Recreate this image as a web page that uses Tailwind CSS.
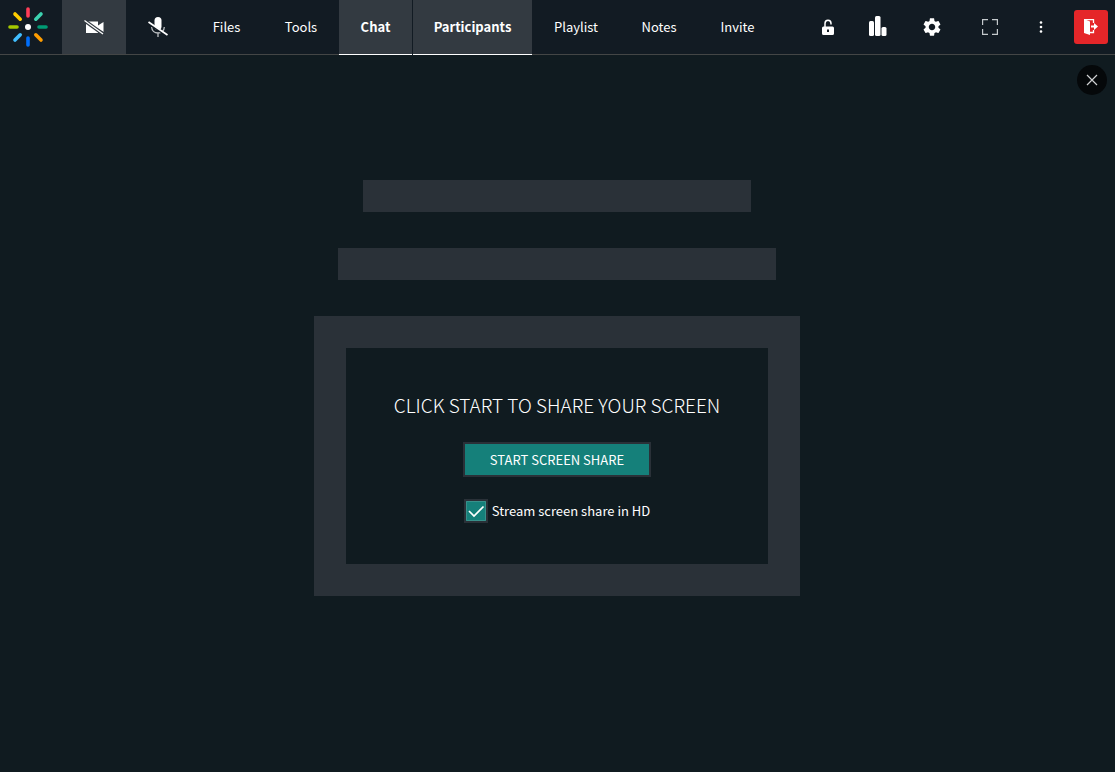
<!DOCTYPE html>
<html lang="en">
<head>
<meta charset="utf-8">
<meta name="viewport" content="width=device-width, initial-scale=1">
<title>Screen share</title>
<script src="https://cdn.jsdelivr.net/npm/@tailwindcss/browser@4"></script>
</head>
<body class="flex min-h-screen flex-col bg-[#101b20] font-['Noto_Sans_CJK_SC',sans-serif] text-[13px] leading-5 text-white">
<header class="flex h-[55px] shrink-0 items-stretch bg-[#121b23]">
  <a href="#" aria-label="Home" class="flex w-[62px] shrink-0 items-center border-b border-[#444646] pl-2">
    <svg class="size-10" viewBox="0 0 40 40" fill="none" stroke-width="3.600" stroke-linecap="round">
      <path stroke="#ff3d57" d="M20 2V9"/>
      <path stroke="#006efa" d="M20 31V38"/>
      <path stroke="#a5c800" d="M2 20H9"/>
      <path stroke="#009b74" d="M31 20H38"/>
      <path stroke="#ffcd00" d="M7 7L12.200 12.200"/>
      <path stroke="#3cd2af" d="M33 7L27.800 12.200"/>
      <path stroke="#41beff" d="M7 33L12.200 27.800"/>
      <path stroke="#ff9d00" d="M33 33L27.800 27.800"/>
      <circle cx="20" cy="20" r="3" fill="#fff"/>
    </svg>
  </a>
  <button type="button" aria-label="Turn camera on" class="flex w-16 shrink-0 items-center justify-center border-b border-[#444646] bg-[#333a41]">
    <svg class="h-4 w-5" viewBox="0 0 20 16">
      <path fill="#fff" d="M2 2.500H14V6.500L19.500 3V13L14 9.500V14H2Z"/>
      <path stroke="#333a41" stroke-width="3.500" d="M1 2L19 15"/>
      <path stroke="#fff" stroke-width="1.200" d="M.5 1.500L19 15"/>
    </svg>
  </button>
  <button type="button" aria-label="Unmute microphone" class="flex w-16 shrink-0 items-center justify-center border-b border-[#444646]">
    <svg class="h-5 w-5" viewBox="0 0 20 20" fill="none">
      <rect x="6.500" y="0" width="7" height="13" rx="3.500" fill="#fff"/>
      <path stroke="#bdc1c4" stroke-width="1.300" d="M3.700 10C3.700 18 16.300 18 16.300 10M10 16V20"/>
      <path stroke="#121b23" stroke-width="2.600" d="M1 6.500L19.500 19"/>
      <path stroke="#fff" stroke-width="1.700" d="M.5 5L19.500 18"/>
    </svg>
  </button>
  <nav class="flex">
    <button type="button" class="w-[73px] border-b border-[#444646]">Files</button>
    <button type="button" class="w-[76px] border-b border-[#444646]">Tools</button>
    <button type="button" class="w-[73px] border-b border-white bg-[#333a41] font-bold">Chat</button>
    <button type="button" class="ml-px w-[119px] border-b border-white bg-[#333a41] font-bold">Participants</button>
    <button type="button" class="w-[88px] border-b border-[#444646]">Playlist</button>
    <button type="button" class="w-[78px] border-b border-[#444646]">Notes</button>
    <button type="button" class="w-[79px] border-b border-[#444646]">Invite</button>
  </nav>
  <div class="flex grow items-center justify-end border-b border-[#444646] pr-[7px]">
    <button type="button" aria-label="Lock room" class="flex h-full w-[50px] items-center justify-center">
      <svg class="h-4 w-3" viewBox="0 0 12 16"><path fill="none" stroke="#fff" stroke-width="1.500" d="M3 8V4.500C3 .1 9 .1 9 4.500V5.500"/><path fill="#fff" fill-rule="evenodd" d="M1.500 7.500H10.500Q12 7.500 12 9V14.500Q12 16 10.500 16H1.500Q0 16 0 14.500V9Q0 7.500 1.500 7.500ZM5 10.500V13H7V10.500Z"/></svg>
    </button>
    <button type="button" aria-label="Polls" class="flex h-full w-[49px] items-center justify-center pb-0.5">
      <svg class="h-5 w-[18px]" viewBox="0 0 18 20" fill="#fff"><rect x="0" y="5" width="5" height="15" rx="1.500"/><rect x="6" y="0" width="5.500" height="20" rx="1.500"/><rect x="12.500" y="11" width="5" height="9" rx="1.500"/></svg>
    </button>
    <button type="button" aria-label="Settings" class="flex h-full w-[60px] items-center justify-center">
      <svg class="size-[18px]" viewBox="2 2 20 20" fill="#fff"><path d="M19.140 12.940c.040-.3.060-.61.060-.94s-.020-.64-.070-.94l2.030-1.580c.18-.14.230-.41.120-.61l-1.920-3.320c-.12-.22-.37-.29-.59-.22l-2.390.96c-.5-.38-1.030-.7-1.620-.94l-.36-2.540c-.040-.24-.24-.41-.48-.41h-3.840c-.24 0-.43.17-.47.41l-.36 2.540c-.59.24-1.130.57-1.620.94l-2.390-.96c-.22-.08-.47 0-.59.22L2.740 8.870c-.12.21-.08.47.12.61l2.030 1.580c-.05.3-.09.63-.09.94s.02.64.07.94l-2.030 1.580c-.18.14-.23.41-.12.61l1.920 3.320c.12.22.37.29.59.22l2.390-.96c.5.38 1.030.7 1.620.94l.36 2.540c.05.24.24.41.48.41h3.840c.24 0 .44-.17.47-.41l.36-2.540c.59-.24 1.130-.56 1.620-.94l2.390.96c.22.08.47 0 .59-.22l1.920-3.320c.12-.22.07-.47-.12-.61l-2.010-1.580zM12 15.600c-1.980 0-3.600-1.620-3.600-3.600s1.620-3.600 3.600-3.600 3.600 1.620 3.600 3.600-1.620 3.600-3.600 3.600z"/></svg>
    </button>
    <button type="button" aria-label="Full screen" class="flex h-full w-14 items-center justify-center">
      <svg class="size-4" viewBox="0 0 16 16" fill="none" stroke="#c4c9cc" stroke-width="1.200"><path d="M.6 6V.6H6M10 .6H15.400V6M15.400 10V15.400H10M6 15.400H.6V10"/></svg>
    </button>
    <button type="button" aria-label="More options" class="flex h-full w-[46px] items-center justify-center">
      <svg class="h-3 w-1" viewBox="0 0 4 12" fill="#fff"><circle cx="2" cy="1.500" r="1.300"/><circle cx="2" cy="6" r="1.300"/><circle cx="2" cy="10.500" r="1.300"/></svg>
    </button>
    <button type="button" aria-label="Leave room" class="ml-2.5 flex size-[34px] items-center justify-center rounded-[3px] bg-[#e52629]">
      <svg class="size-4" viewBox="0 0 16 16" fill="#fff"><path d="M1 0L7 2.500V16L1 14Z"/><path d="M1 .6H10.500V4M10.500 11V13.500H6" fill="none" stroke="#fff" stroke-width="1.300"/><path d="M8 6.500H11V4L15 7.500L11 11V8.500H8Z"/></svg>
    </button>
  </div>
</header>
<main class="relative flex grow flex-col items-center gap-9 pt-[125px] pr-[17px] pb-16 pl-4">
  <button type="button" aria-label="Close" class="absolute top-2.5 right-2 flex size-[30px] items-center justify-center rounded-full bg-[#05080a]">
    <svg class="size-3" viewBox="0 0 12 12" stroke="#d0d2d3" stroke-width="1.200"><path d="M1 1L11 11M11 1L1 11"/></svg>
  </button>
  <div class="h-8 w-full max-w-[388px] bg-[#2a3138]"></div>
  <div class="h-8 w-full max-w-[438px] bg-[#2a3138]"></div>
  <section class="flex w-full max-w-[486px] flex-col items-center border-32 border-[#2a3138] pt-[42px] pb-[41px]">
    <h1 class="text-center text-[19px] leading-[30px] font-light">CLICK START TO SHARE YOUR SCREEN</h1>
    <button type="button" class="mt-[22px] h-[35px] w-[188px] border-2 border-[#2a3138] bg-[#15807a]">START SCREEN SHARE</button>
    <label class="mt-[22px] flex items-center gap-1">
      <span class="relative flex size-6">
        <input type="checkbox" checked class="peer size-6 appearance-none border-2 border-[#2a3138] bg-[#2a3138] checked:bg-[#15807a]">
        <svg class="pointer-events-none absolute inset-0 hidden size-6 peer-checked:block" viewBox="0 0 24 24" fill="none"><path stroke="#38918b" d="M2.500 2.500H21.500V21.500H2.500Z"/><path stroke="#fff" stroke-width="1.700" d="M5 12L10 17L19.500 7.500"/></svg>
      </span>
      Stream screen share in HD
    </label>
  </section>
</main>
</body>
</html>
